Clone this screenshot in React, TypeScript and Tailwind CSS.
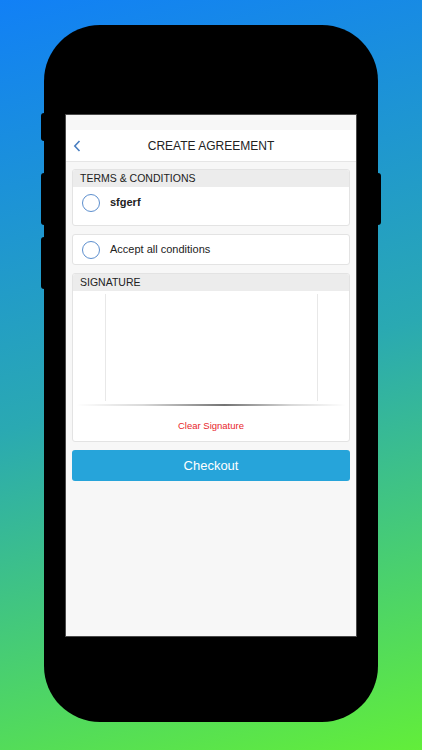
import React from "react";

const font = { fontFamily: '"Liberation Sans", Arial, sans-serif' };

function Radio() {
  return <div className="w-[18px] h-[18px] rounded-full border-[1.5px] border-[#5d8fce] bg-white shrink-0" />;
}

export default function App() {
  return (
    <div
      className="w-[422px] h-[750px] overflow-hidden bg-[linear-gradient(165deg,#1180f6_0%,#2aa9b2_50%,#62ee3a_100%)] pt-[25px] pl-[44px]"
      style={font}
    >
      <div className="relative w-[334px] h-[697px] rounded-[56px] bg-black pt-[89px] pl-[21px]">
        {/* side buttons */}
        <div className="absolute left-[-3px] top-[88px] w-[3px] h-[28px] bg-black rounded-l-sm" />
        <div className="absolute left-[-3px] top-[148px] w-[3px] h-[52px] bg-black rounded-l-sm" />
        <div className="absolute left-[-3px] top-[212px] w-[3px] h-[52px] bg-black rounded-l-sm" />
        <div className="absolute right-[-3px] top-[148px] w-[3px] h-[52px] bg-black rounded-r-sm" />

        <div className="w-[292px] h-[523px] bg-[#f7f7f7] border border-[#4a4a4a] flex flex-col overflow-hidden">
          <div className="h-[15px] bg-[#f7f7f7]" />
          <div className="h-[32px] bg-white border-b border-[#e6e6e6] flex items-center relative">
            <svg className="absolute left-[7px] top-[10px]" width="8" height="12" viewBox="0 0 8 12">
              <path d="M6.5 1 L1.8 6 L6.5 11" fill="none" stroke="#4a7fc1" strokeWidth="1.6" />
            </svg>
            <div className="flex-1 text-center text-[12px] text-[#222] pt-[1px]">CREATE AGREEMENT</div>
          </div>

          <div className="px-[6px] pt-[7px] flex flex-col">
            <div className="bg-white rounded-[3px] border border-[#e3e3e3] h-[57px] overflow-hidden">
              <div className="h-[17px] bg-[#ececec] flex items-center pl-[7px] text-[10.5px] text-[#222]">TERMS &amp; CONDITIONS</div>
              <div className="flex items-center pl-[9px] pt-[7px] gap-[10px]">
                <Radio />
                <span className="text-[11px] font-bold text-[#222] -mt-[2px]">sfgerf</span>
              </div>
            </div>

            <div className="mt-[8px] bg-white rounded-[3px] border border-[#e3e3e3] h-[31px] flex items-center pl-[9px] gap-[10px]">
              <Radio />
              <span className="text-[11px] text-[#222]">Accept all conditions</span>
            </div>

            <div className="mt-[8px] bg-white rounded-[3px] border border-[#e3e3e3] h-[169px] overflow-hidden flex flex-col">
              <div className="h-[17px] bg-[#ececec] flex items-center pl-[7px] text-[10.5px] text-[#222]">SIGNATURE</div>
              <div className="mt-[3px] ml-[32px] w-[213px] h-[107px] border-x border-[#e8e8e8]" />
              <div className="mt-[3px] mx-[3px] h-[2px] bg-[linear-gradient(90deg,rgba(0,0,0,0)_0%,rgba(0,0,0,0.15)_25%,rgba(0,0,0,0.55)_55%,rgba(0,0,0,0.15)_80%,rgba(0,0,0,0)_100%)]" />
              <div className="mt-[13px] text-center text-[9.5px] text-[#e8262b]">Clear Signature</div>
            </div>

            <div className="mt-[8px] h-[31px] rounded-[3px] bg-[#26a4da] flex items-center justify-center text-white text-[13px]">
              Checkout
            </div>
          </div>
        </div>
      </div>
    </div>
  );
}
